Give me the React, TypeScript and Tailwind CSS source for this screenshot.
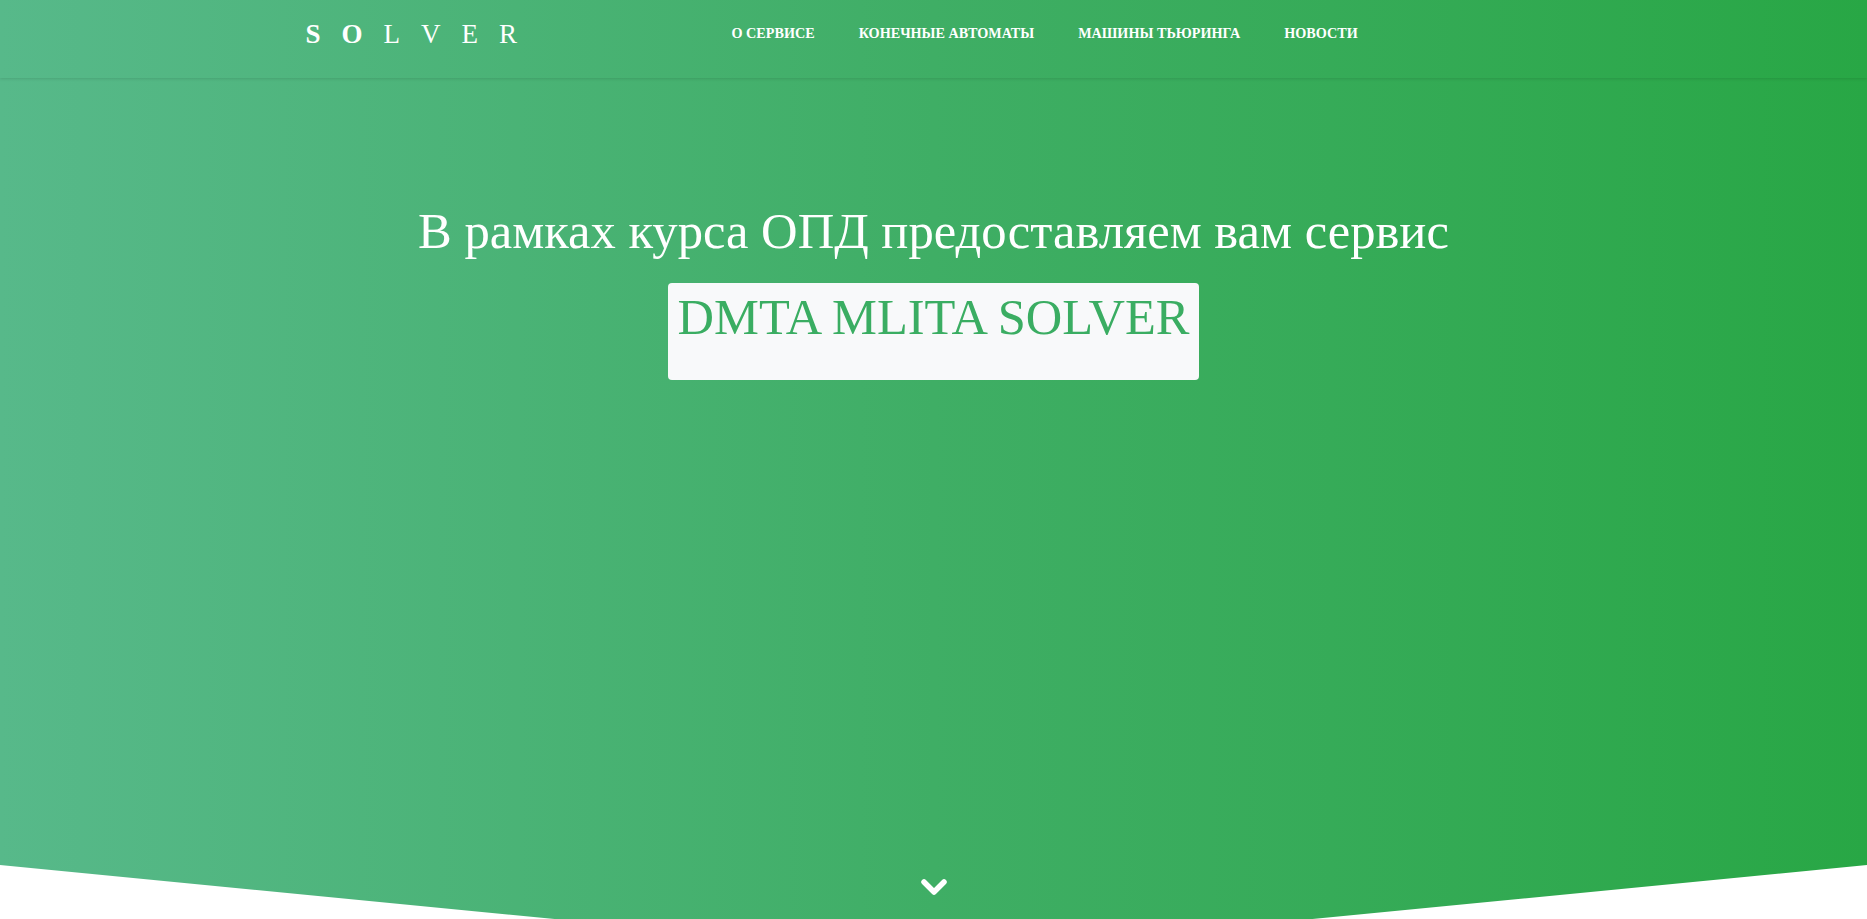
const navLinks = ["О сервисе", "Конечные автоматы", "Машины Тьюринга", "Новости"];

const serif = { fontFamily: '"Liberation Serif", "Times New Roman", serif' };

export default function App() {
  return (
    <div className="h-[919px] w-full overflow-hidden bg-white" style={serif}>
      <section className="relative h-[919px] w-full bg-gradient-to-r from-[#57b98a] via-[#3fae65] to-[#28a745] [clip-path:polygon(0_0,100%_0,100%_865px,70.3%_100%,29.7%_100%,0_865px)]">
        <header className="h-[78px] w-full shadow-[0_1px_3px_rgba(0,0,0,0.12)]">
          <div className="mx-auto flex h-full w-[1280px] items-center px-3 pb-[11px]">
            <a className="flex w-[426px] items-center gap-[21px] pt-[2px] text-[27px] text-white" href="#">
              <span className="font-bold">S</span>
              <span className="font-bold">O</span>
              <span>L</span>
              <span>V</span>
              <span>E</span>
              <span>R</span>
            </a>
            <nav className="flex items-center gap-[44px] pt-[1px]">
              {navLinks.map((link) => (
                <a key={link} href="#" className="text-[14.2px] font-bold uppercase text-white">
                  {link}
                </a>
              ))}
            </nav>
          </div>
        </header>

        <div className="flex flex-col items-center pt-[123px] text-center">
          <h1 className="whitespace-nowrap text-[50.6px] leading-[1.2] text-white">
            В рамках курса ОПД предоставляем вам сервис
          </h1>
          <div className="mt-[21px] flex h-[97px] w-[531px] justify-center rounded bg-[#f8f9fa] pt-[4px]">
            <span className="whitespace-nowrap text-[50.5px] leading-[1.2] text-[#3aad62]">
              DMTA MLITA SOLVER
            </span>
          </div>
        </div>

        <a href="#" className="absolute bottom-[23px] left-1/2 -translate-x-1/2 text-white">
          <svg width="28" height="18" viewBox="0 0 28 18" fill="none">
            <polyline
              points="4,4 14,14 24,4"
              stroke="currentColor"
              strokeWidth="5.5"
              strokeLinecap="round"
              strokeLinejoin="round"
            />
          </svg>
        </a>
      </section>
    </div>
  );
}
